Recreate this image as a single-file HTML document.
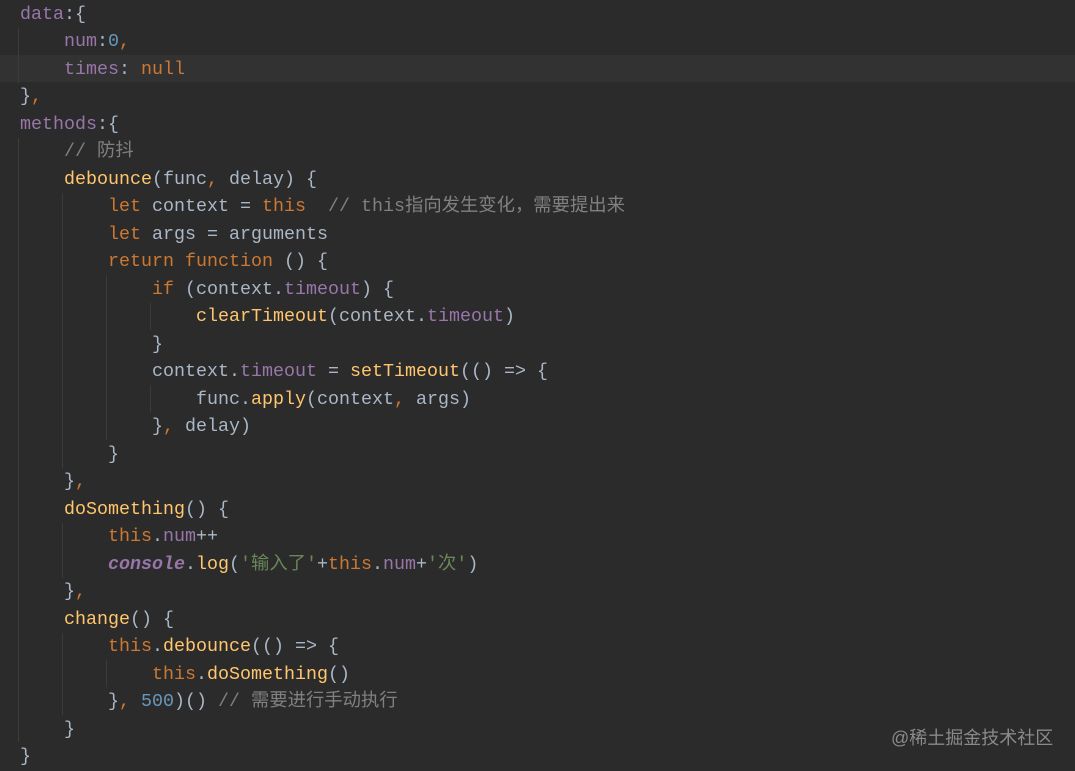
<!DOCTYPE html>
<html><head><meta charset="utf-8"><style>
body{margin:0;width:1075px;height:769px;background:#2b2b2b;overflow:hidden;position:relative}
pre{margin:0;position:absolute;left:20px;top:1px;font-family:"Liberation Mono","Noto Sans CJK SC",monospace;font-size:18.33px;line-height:27.48px;color:#a9b7c6}
.k{color:#cc7832}.p{color:#9876aa}.f{color:#ffc66d}.n{color:#6897bb}.c{color:#808080}.s{color:#6a8759}.i{font-style:italic;font-weight:bold}
.hl{position:absolute;left:0;right:0;top:55px;height:27px;background:#323232}
.g{position:absolute;width:1px;background:#3c3c3c}
.wm{position:absolute;left:891px;top:724px;font-family:"Liberation Sans","Noto Sans CJK SC",sans-serif;font-size:18px;color:#8a8a8a}
</style></head><body>
<div class="hl"></div>
<div class="g" style="left:18px;top:28px;height:55px"></div>
<div class="g" style="left:18px;top:138px;height:604px"></div>
<div class="g" style="left:62px;top:193px;height:275px"></div>
<div class="g" style="left:106px;top:275px;height:165px"></div>
<div class="g" style="left:150px;top:303px;height:27px"></div>
<div class="g" style="left:150px;top:385px;height:27px"></div>
<div class="g" style="left:62px;top:523px;height:55px"></div>
<div class="g" style="left:62px;top:633px;height:82px"></div>
<div class="g" style="left:106px;top:660px;height:27px"></div>
<pre><span class="p">data</span>:{
    <span class="p">num</span>:<span class="n">0</span><span class="k">,</span>
    <span class="p">times</span>: <span class="k">null</span>
}<span class="k">,</span>
<span class="p">methods</span>:{
    <span class="c">// 防抖</span>
    <span class="f">debounce</span>(func<span class="k">,</span> delay) {
        <span class="k">let</span> context = <span class="k">this</span>  <span class="c">// this指向发生变化，需要提出来</span>
        <span class="k">let</span> args = arguments
        <span class="k">return function</span> () {
            <span class="k">if</span> (context.<span class="p">timeout</span>) {
                <span class="f">clearTimeout</span>(context.<span class="p">timeout</span>)
            }
            context.<span class="p">timeout</span> = <span class="f">setTimeout</span>(() => {
                func.<span class="f">apply</span>(context<span class="k">,</span> args)
            }<span class="k">,</span> delay)
        }
    }<span class="k">,</span>
    <span class="f">doSomething</span>() {
        <span class="k">this</span>.<span class="p">num</span>++
        <span class="p i">console</span>.<span class="f">log</span>(<span class="s">'输入了'</span>+<span class="k">this</span>.<span class="p">num</span>+<span class="s">'次'</span>)
    }<span class="k">,</span>
    <span class="f">change</span>() {
        <span class="k">this</span>.<span class="f">debounce</span>(() => {
            <span class="k">this</span>.<span class="f">doSomething</span>()
        }<span class="k">,</span> <span class="n">500</span>)() <span class="c">// 需要进行手动执行</span>
    }
}</pre>
<div class="wm">@稀土掘金技术社区</div>
</body></html>
